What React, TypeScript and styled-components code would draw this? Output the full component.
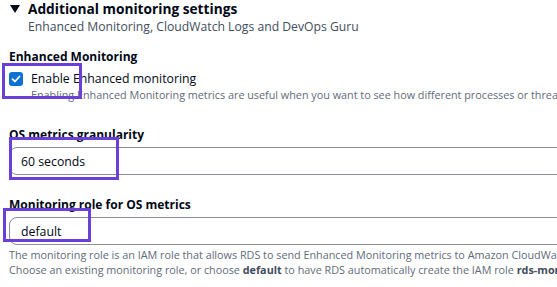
import React from 'react';
import styled, { createGlobalStyle } from 'styled-components';

const GlobalStyle = createGlobalStyle`
  html, body {
    margin: 0;
    padding: 0;
    background: #ffffff;
    overflow: hidden;
  }
  body {
    font-family: 'Open Sans', 'Noto Sans', sans-serif;
    color: #000716;
  }
`;

const Page = styled.div`
  width: 557px;
  height: 287px;
  overflow: hidden;
  display: flex;
  flex-direction: column;
  padding: 0 0 0 9px;
  box-sizing: border-box;
`;

const Header = styled.div`
  display: flex;
  flex-direction: column;
  padding-left: 1px;
`;

const TitleRow = styled.div`
  display: flex;
  align-items: center;
  gap: 8px;
  height: 18px;
`;

const Caret = styled.svg`
  width: 10px;
  height: 8px;
  flex: none;
`;

const Title = styled.h2`
  margin: 0;
  font-size: 13.7px;
  font-weight: 700;
  line-height: 18px;
  white-space: nowrap;
`;

const Subtitle = styled.div`
  margin: 0 0 0 18px;
  font-size: 12.2px;
  line-height: 18px;
  color: #414d5c;
  white-space: nowrap;
`;

const Field = styled.div<{ $top: number }>`
  position: relative;
  display: flex;
  flex-direction: column;
  margin-top: ${(p) => p.$top}px;
`;

const Label = styled.div`
  font-size: 12px;
  font-weight: 700;
  line-height: 18px;
  white-space: nowrap;
`;

const CheckRow = styled.label`
  display: flex;
  align-items: center;
  gap: 8px;
  height: 20px;
  margin-top: 3px;
`;

const Box = styled.span`
  width: 14px;
  height: 14px;
  border-radius: 3px;
  background: #0972d3;
  display: flex;
  align-items: center;
  justify-content: center;
  flex: none;
`;

const CheckText = styled.span`
  font-size: 12.3px;
  line-height: 20px;
  white-space: nowrap;
`;

const Hint = styled.div<{ $indent?: number; $top?: number }>`
  font-size: 10.8px;
  line-height: 15px;
  color: #5f6b7a;
  white-space: nowrap;
  padding-left: ${(p) => p.$indent ?? 0}px;
  margin-top: ${(p) => p.$top ?? 0}px;

  b {
    font-weight: 700;
    color: #414d5c;
  }
`;

const Input = styled.div`
  box-sizing: border-box;
  width: 600px;
  height: 28px;
  margin-top: 3px;
  border: 1px solid #8c8c94;
  border-radius: 8px;
  display: flex;
  align-items: center;
  padding-left: 11px;
  font-size: 12.3px;
  color: #000716;
`;

const Highlight = styled.div<{ $x: number; $y: number; $w: number; $h: number }>`
  position: absolute;
  left: ${(p) => p.$x}px;
  top: ${(p) => p.$y}px;
  width: ${(p) => p.$w}px;
  height: ${(p) => p.$h}px;
  border: 3px solid #6b40d9;
  box-sizing: border-box;
  pointer-events: none;
`;

const App: React.FC = () => {
  return (
    <>
      <GlobalStyle />
      <Page>
        <Header>
          <TitleRow>
            <Caret viewBox="0 0 10 8">
              <path d="M0 0 H10 L5 8 Z" fill="#000716" />
            </Caret>
            <Title>Additional monitoring settings</Title>
          </TitleRow>
          <Subtitle>Enhanced Monitoring, CloudWatch Logs and DevOps Guru</Subtitle>
        </Header>

        <Field $top={12}>
          <Label>Enhanced Monitoring</Label>
          <CheckRow>
            <Box>
              <svg width="10" height="10" viewBox="0 0 10 10">
                <path d="M1.5 5.2 L4 7.5 L8.5 2.5" stroke="#fff" strokeWidth="1.8" fill="none" strokeLinecap="round" strokeLinejoin="round" />
              </svg>
            </Box>
            <CheckText>Enable Enhanced monitoring</CheckText>
          </CheckRow>
          <Hint $indent={22} $top={-2}>
            Enabling Enhanced Monitoring metrics are useful when you want to see how different processes or threads use the CPU.
          </Hint>
          <Highlight $x={-7} $y={15} $w={80} $h={36} />
        </Field>

        <Field $top={24}>
          <Label>OS metrics granularity</Label>
          <Input>60 seconds</Input>
          <Highlight $x={0} $y={11} $w={110} $h={43} />
        </Field>

        <Field $top={21}>
          <Label>Monitoring role for OS metrics</Label>
          <Input>default</Input>
          <Hint $top={2}>The monitoring role is an IAM role that allows RDS to send Enhanced Monitoring metrics to Amazon CloudWatch Logs.</Hint>
          <Hint>
            Choose an existing monitoring role, or choose <b>default</b> to have RDS automatically create the IAM role <b>rds-monitoring-role</b>.
          </Hint>
          <Highlight $x={-6} $y={12} $w={88} $h={34} />
        </Field>
      </Page>
    </>
  );
};

export default App;
